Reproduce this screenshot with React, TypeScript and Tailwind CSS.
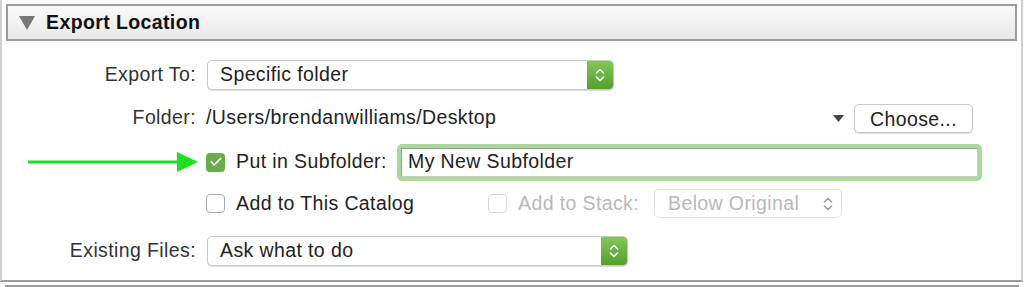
import { Check } from "lucide-react";

function Stepper({ disabled }: { disabled?: boolean }) {
  return (
    <svg width="10" height="16" viewBox="0 0 10 16" fill="none">
      <path
        d="M1.5 6 L5 2.5 L8.5 6 M1.5 10 L5 13.5 L8.5 10"
        stroke={disabled ? "#9a9a9a" : "#ffffff"}
        strokeWidth="1.6"
        strokeLinecap="round"
        strokeLinejoin="round"
      />
    </svg>
  );
}

function Select({ value, width }: { value: string; width: string }) {
  return (
    <div
      className={`flex h-[30px] ${width} items-stretch rounded-[5px] border border-[#c9c9c9] bg-white shadow-[0_1px_1px_rgba(0,0,0,0.15)]`}
    >
      <span className="flex flex-1 items-center pl-[12px] text-[#222]">{value}</span>
      <span className="flex w-[26px] items-center justify-center rounded-r-[4px] bg-gradient-to-b from-[#84c65a] to-[#52a02e]">
        <Stepper />
      </span>
    </div>
  );
}

function Box({ checked, disabled }: { checked?: boolean; disabled?: boolean }) {
  if (checked) {
    return (
      <span className="flex h-[19px] w-[19px] shrink-0 items-center justify-center rounded-[4px] bg-[#6aab4e]">
        <Check className="h-[14px] w-[14px] text-white" strokeWidth={3} />
      </span>
    );
  }
  return (
    <span
      className={`h-[19px] w-[19px] shrink-0 rounded-[4px] border bg-white ${
        disabled ? "border-[#d8d8d8]" : "border-[#a9a9a9]"
      }`}
    />
  );
}

export default function App() {
  return (
    <div className="h-[287px] w-[1024px] overflow-hidden bg-white font-['Liberation_Sans',Arial,sans-serif] text-[19.5px] tracking-[0.02em] text-[#333]">
      <div className="mr-[1px] border-x-2 border-b-2 border-x-[#cfcfcf] border-b-[#9c9c9c] pb-[14px] pt-[4px]">
        {/* section header */}
        <div className="mx-[4px] flex h-[37px] items-center border-2 border-[#9c9c9c] bg-gradient-to-b from-[#fafafa] to-[#e8e8e8]">
          <svg width="16" height="14" viewBox="0 0 16 14" className="ml-[11px]">
            <path d="M0 0 H16 L8 14 Z" fill="#777" />
          </svg>
          <span className="ml-[11px] font-bold text-[#111]">Export Location</span>
        </div>

        <div className="mt-[19px] grid grid-cols-[194px_1fr] items-center gap-x-[10px]">
          {/* Export To */}
          <div className="text-right">Export To:</div>
          <div className="flex h-[30px] items-center pl-px">
            <Select value="Specific folder" width="w-[407px]" />
          </div>

          {/* Folder */}
          <div className="mt-[13px] text-right">Folder:</div>
          <div className="mt-[13px] flex h-[30px] items-center pr-[48px]">
            <span className="text-[#222]">/Users/brendanwilliams/Desktop</span>
            <span className="flex-1" />
            <svg width="11" height="7" viewBox="0 0 11 7">
              <path d="M0 0 H11 L5.5 7 Z" fill="#444" />
            </svg>
            <button className="ml-[10px] h-[29px] w-[119px] rounded-[5px] border border-[#c9c9c9] bg-white text-[#222] shadow-[0_1px_1px_rgba(0,0,0,0.15)]">
              Choose...
            </button>
          </div>

          {/* Put in Subfolder */}
          <div className="mt-[10px] flex h-[38px] items-center justify-end">
            <svg width="170" height="22" viewBox="0 0 170 22" className="-mr-[2px]">
              <path d="M0 11 H152" stroke="#1fe01f" strokeWidth="3" />
              <path d="M149 1 L170 11 L149 21 Z" fill="#1fe01f" />
            </svg>
          </div>
          <div className="mt-[10px] flex h-[38px] items-center pr-[39px]">
            <Box checked />
            <span className="ml-[11px] w-[161px] text-[#222]">Put in Subfolder:</span>
            <div className="flex-1 rounded-[5px] bg-[#a9d99d] p-[4px]">
              <div className="flex h-[29px] items-center border border-[#9a9a9a] border-b-[#c9c9c9] border-r-[#c9c9c9] bg-white pl-[6px] text-[#222]">
                My New Subfolder
              </div>
            </div>
          </div>

          {/* Add to Catalog */}
          <div className="mt-[8px]" />
          <div className="mt-[8px] flex h-[29px] items-center">
            <Box />
            <span className="ml-[11px] w-[252px] text-[#222]">Add to This Catalog</span>
            <Box disabled />
            <span className="ml-[11px] w-[136px] text-[#b8b8b8]">Add to Stack:</span>
            <div className="flex h-[29px] w-[188px] items-center rounded-[5px] border border-[#e0e0e0] bg-white text-[#b8b8b8]">
              <span className="flex-1 pl-[13px]">Below Original</span>
              <span className="mr-[8px] flex">
                <Stepper disabled />
              </span>
            </div>
          </div>

          {/* Existing Files */}
          <div className="mt-[18px] text-right">Existing Files:</div>
          <div className="mt-[18px] flex h-[30px] items-center pl-px">
            <Select value="Ask what to do" width="w-[421px]" />
          </div>
        </div>
      </div>
      <div className="mx-[5px] mt-[3px] h-[10px] border-t-2 border-[#9c9c9c]" />
    </div>
  );
}
